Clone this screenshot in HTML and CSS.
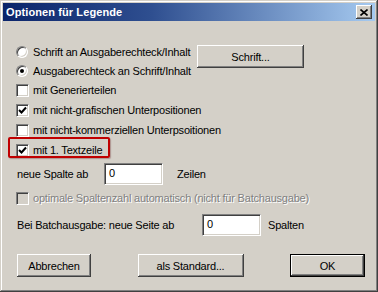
FILE: index.html
```html
<!DOCTYPE html>
<html lang="de">
<head>
  <meta charset="UTF-8" />
  <title>Optionen für Legende</title>
  <link rel="stylesheet" href="styles.css">
</head>
<body>
  <div class="window">
    <div class="titlebar">
      <span class="title">Optionen für Legende</span>
      <span class="close">
        <svg width="8" height="7" viewBox="0 0 8 7"><path d="M0.5 0.5 L7.5 6.5 M7.5 0.5 L0.5 6.5" stroke="#000" stroke-width="1.6" fill="none"/></svg>
      </span>
    </div>
    <div class="content">
      <div class="top">
        <div class="radios">
          <div class="row r1"><span class="radio"></span><span>Schrift an Ausgaberechteck/Inhalt</span></div>
          <div class="row r2"><span class="radio on"></span><span>Ausgaberechteck an Schrift/Inhalt</span></div>
        </div>
        <div class="btn font-btn">Schrift...</div>
      </div>
      <div class="row"><span class="check"></span><span>mit Generierteilen</span></div>
      <div class="row"><span class="check on"><svg width="9" height="9" viewBox="0 0 9 9"><path d="M1 4 L3.5 6.5 L8 1.5" stroke="#000" stroke-width="2" fill="none"/></svg></span><span>mit nicht-grafischen Unterpositionen</span></div>
      <div class="row"><span class="check"></span><span>mit nicht-kommerziellen Unterpsoitionen</span></div>
      <div class="row hl"><span class="check on"><svg width="9" height="9" viewBox="0 0 9 9"><path d="M1 4 L3.5 6.5 L8 1.5" stroke="#000" stroke-width="2" fill="none"/></svg></span><span>mit 1. Textzeile</span></div>
      <div class="field f1">
        <span class="lbl lbl-short">neue Spalte ab</span>
        <span class="input">0</span>
        <span class="unit">Zeilen</span>
      </div>
      <div class="row disabled"><span class="check off"></span><span>optimale Spaltenzahl automatisch (nicht für Batchausgabe)</span></div>
      <div class="field f2">
        <span class="lbl lbl-long">Bei Batchausgabe: neue Seite ab</span>
        <span class="input">0</span>
        <span class="unit unit2">Spalten</span>
      </div>
      <div class="buttons">
        <div class="btn small">Abbrechen</div>
        <div class="btn wide">als Standard...</div>
        <div class="default"><div class="btn small ok">OK</div></div>
      </div>
    </div>
  </div>
</body>
</html>
```

FILE: styles.css
```css
html, body {
  margin: 0;
  padding: 0;
}
body {
  font-family: 'Liberation Sans', Arial, sans-serif;
  font-size: 11px;
  letter-spacing: -0.2px;
  color: #000;
  background: #d4d0c8;
}
.window {
  width: 378px;
  height: 292px;
  box-sizing: border-box;
  padding: 3px 3px 2px 3px;
  background: #d4d0c8;
  box-shadow: inset -1px -1px #404040, inset 1px 1px #d4d0c8, inset -2px -2px #808080, inset 2px 2px #fff;
}
.titlebar {
  height: 18px;
  display: flex;
  align-items: center;
  justify-content: space-between;
  padding: 0 3px 0 3px;
  background: linear-gradient(to right, #0a246a, #2f4f90 40%, #a6caf0);
}
.title {
  color: #fff;
  font-weight: bold;
  font-size: 11px;
  letter-spacing: 0.1px;
}
.close {
  width: 16px;
  height: 14px;
  box-sizing: border-box;
  display: flex;
  align-items: center;
  justify-content: center;
  background: #d4d0c8;
  box-shadow: inset -1px -1px #404040, inset 1px 1px #fff, inset -2px -2px #808080;
}
.content {
  padding: 21px 11px 0 13px;
}
.top {
  display: flex;
}
.radios {
  width: 181px;
}
.row {
  display: flex;
  align-items: center;
  height: 20px;
  gap: 4px;
  white-space: nowrap;
}
.r1, .r2 {
  height: 19px;
  gap: 5px;
}
.radio {
  width: 12px;
  height: 12px;
  box-sizing: border-box;
  border-radius: 50%;
  background: #fff;
  border: 1px solid;
  border-color: #808080 #fff #fff #808080;
  box-shadow: inset 1px 1px #404040, inset -1px -1px #d4d0c8;
  display: flex;
  align-items: center;
  justify-content: center;
}
.radio.on::after {
  content: "";
  width: 4px;
  height: 4px;
  border-radius: 50%;
  background: #000;
}
.check {
  width: 13px;
  height: 13px;
  box-sizing: border-box;
  background: #fff;
  border: 1px solid;
  border-color: #808080 #fff #fff #808080;
  box-shadow: inset 1px 1px #404040, inset -1px -1px #d4d0c8;
  display: flex;
  align-items: center;
  justify-content: center;
}
.check.off {
  background: #d4d0c8;
}
.hl {
  position: relative;
}
.hl::after {
  content: "";
  position: absolute;
  left: -8px;
  top: -3px;
  box-sizing: border-box;
  width: 102px;
  height: 21px;
  border: 2px solid #c00000;
  border-radius: 2px;
  box-shadow: 1px 1px 1px rgba(120, 60, 60, 0.4);
}
.btn {
  box-sizing: border-box;
  height: 23px;
  display: flex;
  align-items: center;
  justify-content: center;
  background: #d4d0c8;
  box-shadow: inset -1px -1px #404040, inset 1px 1px #fff, inset -2px -2px #808080;
}
.font-btn {
  width: 107px;
  margin-top: 3px;
}
.field {
  display: flex;
  align-items: center;
  height: 22px;
}
.f1 {
  margin-top: 3px;
}
.f2 {
  margin-top: 6px;
}
.lbl {
  margin-left: 1px;
}
.lbl-short {
  width: 87px;
}
.lbl-long {
  width: 185px;
}
.input {
  width: 59px;
  height: 22px;
  box-sizing: border-box;
  padding: 3px 0 0 4px;
  background: #fff;
  border: 1px solid;
  border-color: #808080 #fff #fff #808080;
  box-shadow: inset 1px 1px #404040, inset -1px -1px #d4d0c8;
  line-height: 13px;
}
.unit {
  margin-left: 14px;
}
.unit2 {
  margin-left: 7px;
}
.disabled {
  margin-top: 3px;
  color: #808080;
  text-shadow: 1px 1px #fff;
}
.buttons {
  display: flex;
  justify-content: space-between;
  align-items: center;
  margin: 18px 0 0 1px;
}
.small {
  width: 74px;
  height: 23px;
}
.wide {
  width: 106px;
}
.default {
  border: 1px solid #000;
  margin: -1px -1px -1px 0;
}
.ok {
  width: 73px;
  height: 21px;
}
```
